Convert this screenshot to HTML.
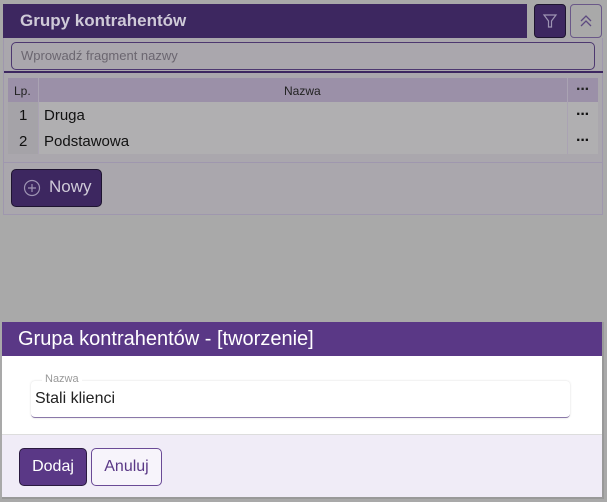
<!DOCTYPE html>
<html><head><meta charset="utf-8"><style>
*{box-sizing:border-box;margin:0;padding:0}
body{width:607px;height:502px;background:#a9a9a9;font-family:"Liberation Sans",sans-serif;position:relative;overflow:hidden}
.a{position:absolute}
.d{font-size:16px;font-weight:bold;letter-spacing:-1px}
</style></head><body>
<div class="a" style="left:3px;top:38px;width:600px;height:177px;background:#aaa7ad;border:1px solid #9f97ae;border-top:none"></div>
<div class="a" style="left:3px;top:4px;width:524px;height:34px;background:#3d2760"></div>
<div class="a" style="left:20px;top:11px;color:#cfcad8;font-weight:bold;font-size:17px">Grupy kontrahentów</div>
<div class="a" style="left:534px;top:4px;width:32px;height:34px;background:#3d2760;border:1px solid #1e1430;border-radius:4px"></div>
<svg class="a" style="left:541px;top:13px" width="18" height="16" viewBox="0 0 18 16"><path d="M3 2H15L10.5 8V14H7.5V8Z" fill="none" stroke="#9e94b3" stroke-width="1.2"/></svg>
<div class="a" style="left:570px;top:4px;width:32px;height:34px;border:1px solid #6a5888;border-radius:4px"></div>
<svg class="a" style="left:578px;top:12px" width="16" height="18" viewBox="0 0 16 18"><path d="M3 9L8 4L13 9M3 14L8 9L13 14" fill="none" stroke="#5d4a80" stroke-width="1.3"/></svg>
<div class="a" style="left:11px;top:42px;width:584px;height:28px;border:1px solid #4d3870;border-radius:5px"></div>
<div class="a" style="left:21px;top:48px;color:#6b6670;font-size:13px">Wprowadź fragment nazwy</div>
<div class="a" style="left:4px;top:71px;width:599px;height:2px;background:#3d2760"></div>
<div class="a" style="left:8px;top:78px;width:590px;height:24px;background:#9b90a8"></div>
<div class="a" style="left:8px;top:102px;width:30px;height:52px;background:#a5a3a8"></div>
<div class="a" style="left:39px;top:102px;width:528px;height:52px;background:#b0afb1"></div>
<div class="a" style="left:568px;top:102px;width:30px;height:52px;background:#b0afb1"></div>
<div class="a" style="left:38px;top:78px;width:1px;height:76px;background:#aaa3b3"></div>
<div class="a" style="left:567px;top:78px;width:1px;height:76px;background:#aaa3b3"></div>
<div class="a" style="left:14px;top:84px;font-size:12px;color:#222">Lp.</div>
<div class="a" style="left:284px;top:84px;font-size:12px;color:#222">Nazwa</div>
<div class="a d" style="left:576px;top:81px;color:#222">···</div>
<div class="a" style="left:19px;top:107px;font-size:15px;color:#111">1</div>
<div class="a" style="left:44px;top:107px;font-size:15px;color:#111">Druga</div>
<div class="a d" style="left:576px;top:106px;color:#111">···</div>
<div class="a" style="left:19px;top:133px;font-size:15px;color:#111">2</div>
<div class="a" style="left:44px;top:133px;font-size:15px;color:#111">Podstawowa</div>
<div class="a d" style="left:576px;top:132px;color:#111">···</div>
<div class="a" style="left:4px;top:162px;width:598px;height:1px;background:#9f97ae"></div>
<div class="a" style="left:11px;top:169px;width:91px;height:38px;background:#3d2760;border:1px solid #1e1430;border-radius:5px"></div>
<svg class="a" style="left:23px;top:179px" width="18" height="18" viewBox="0 0 18 18"><circle cx="9" cy="9" r="7.5" fill="none" stroke="#9e94b3" stroke-width="1.2"/><path d="M9 5V13M5 9H13" stroke="#9e94b3" stroke-width="1.2"/></svg>
<div class="a" style="left:49px;top:177px;color:#cfcad8;font-size:17px">Nowy</div>
<!-- dialog -->
<div class="a" style="left:2px;top:322px;width:602px;height:177px;background:#f0ecf7;border-right:2px solid #999;border-bottom:2px solid #999"></div>
<div class="a" style="left:2px;top:322px;width:600px;height:34px;background:#5a3886"></div>
<div class="a" style="left:18px;top:328px;color:#fff;font-size:20px">Grupa kontrahentów - [tworzenie]</div>
<div class="a" style="left:2px;top:356px;width:600px;height:79px;background:#fff;border-bottom:1px solid #ddd"></div>
<div class="a" style="left:31px;top:381px;width:539px;height:37px;background:#fff;border-radius:4px;box-shadow:0 0 2px rgba(0,0,0,.15);border-bottom:1px solid #8a78a8"></div>
<div class="a" style="left:42px;top:373px;background:#fff;padding:0 3px;color:#999;font-size:11px">Nazwa</div>
<div class="a" style="left:35px;top:390px;color:#222;font-size:16px">Stali klienci</div>
<div class="a" style="left:19px;top:448px;width:68px;height:38px;background:#5a3886;border:1px solid #2a1a40;border-radius:5px;color:#fff;font-size:16px;text-align:center;line-height:36px">Dodaj</div>
<div class="a" style="left:91px;top:448px;width:71px;height:38px;background:#f7f4fb;border:1px solid #6a4a96;border-radius:5px;color:#5a3886;font-size:16px;text-align:center;line-height:36px">Anuluj</div>
</body></html>
